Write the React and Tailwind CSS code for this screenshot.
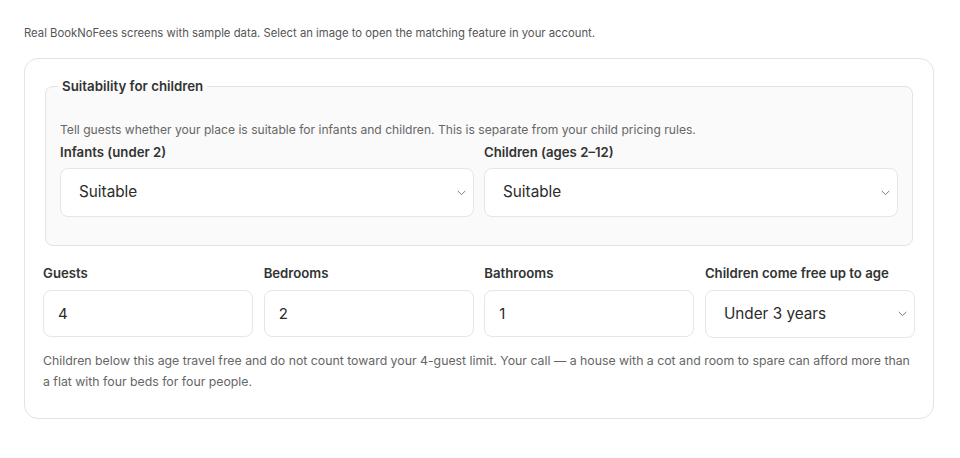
import React from 'react';

function Chevron() {
  return (
    <svg width="9" height="6" viewBox="0 0 9 6" fill="none" className="pointer-events-none absolute right-[8px] top-1/2 -translate-y-1/2">
      <path d="M1 1.2 L4.5 4.6 L8 1.2" stroke="#7a7a7a" strokeWidth="1" strokeLinecap="round" strokeLinejoin="round" />
    </svg>
  );
}

function SelectBox({ value, className = '' }) {
  return (
    <div className="relative">
      <select
        defaultValue={value}
        className={`w-full appearance-none rounded-lg border border-[#e6e6e6] bg-white pl-[18px] text-[15.3px] text-[#2b2b2b] outline-none ${className}`}
      >
        <option>{value}</option>
      </select>
      <Chevron />
    </div>
  );
}

function NumberField({ label, value }) {
  return (
    <label className="flex flex-col">
      <span className="mb-[8px] text-[13.2px] leading-[18px] font-semibold text-[#333]">{label}</span>
      <input
        type="text"
        defaultValue={value}
        className="h-[47px] w-full rounded-lg border border-[#e6e6e6] bg-white px-[14px] text-[15px] text-[#2b2b2b] outline-none"
      />
    </label>
  );
}

export default function App() {
  return (
    <div className="min-h-screen bg-white pt-[25px] font-['Inter',sans-serif]">
      <p className="ml-6 text-[11.3px] leading-4 text-[#555]">
        Real BookNoFees screens with sample data. Select an image to open the matching feature in your account.
      </p>

      <div className="mt-[17px] ml-6 w-[910px] rounded-[14px] border border-[#e3e3e3] bg-white px-[18px] pt-[18px] pb-[26px]">
        <fieldset className="mx-[2px] rounded-lg border border-[#e3e3e3] bg-[#fafafa] px-[14px] pt-[26px] pb-[28px]">
          <legend className="ml-[-2px] px-[4px] text-[13.3px] leading-[18px] font-semibold text-[#333]">
            Suitability for children
          </legend>
          <p className="text-[12.1px] leading-[18px] text-[#666]">
            Tell guests whether your place is suitable for infants and children. This is separate from your child pricing rules.
          </p>
          <div className="mt-[4px] grid grid-cols-2 gap-[10px]">
            <div>
              <div className="mb-[7px] text-[13.2px] leading-[18px] font-semibold text-[#333]">Infants (under 2)</div>
              <SelectBox value="Suitable" className="h-[49px]" />
            </div>
            <div>
              <div className="mb-[7px] text-[13.2px] leading-[18px] font-semibold text-[#333]">Children (ages 2–12)</div>
              <SelectBox value="Suitable" className="h-[49px]" />
            </div>
          </div>
        </fieldset>

        <div className="mt-[18px] grid grid-cols-4 gap-[10.5px]">
          <NumberField label="Guests" value="4" />
          <NumberField label="Bedrooms" value="2" />
          <NumberField label="Bathrooms" value="1" />
          <label className="flex flex-col">
            <span className="mb-[8px] text-[13.2px] leading-[18px] font-semibold text-[#333]">Children come free up to age</span>
            <SelectBox value="Under 3 years" className="h-[48px]" />
          </label>
        </div>

        <p className="mt-[12px] text-[12.3px] leading-[21px] text-[#666]">
          Children below this age travel free and do not count toward your 4-guest limit. Your call — a house with a cot and room to spare can afford more than a flat with four beds for four people.
        </p>
      </div>
    </div>
  );
}
